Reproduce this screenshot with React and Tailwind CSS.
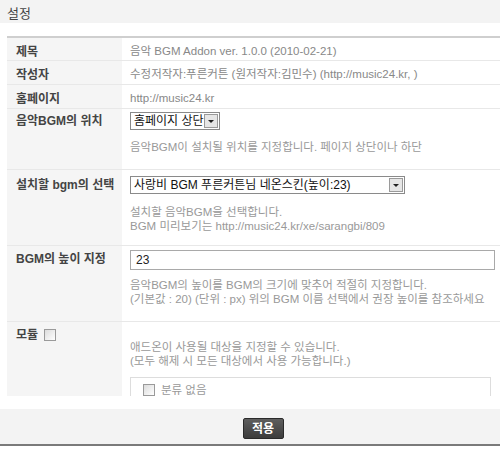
import React from 'react';

const font = { fontFamily: '"Liberation Sans", "Noto Sans CJK KR", sans-serif' };

function Check() {
  return (
    <span className="inline-block w-[12px] h-[12px] border border-[#9a9a9a] bg-gradient-to-br from-[#dcdcdc] to-[#ffffff] align-middle" />
  );
}

function FakeSelect({ label, width }) {
  return (
    <div className={`flex items-center h-[18px] border border-[#8a8a8a] bg-white ${width}`}>
      <span className="flex-1 pl-[3px] text-[12px] text-[#111] leading-none whitespace-nowrap">{label}</span>
      <span className="w-[14px] h-[14px] mr-[1px] flex items-center justify-center border border-[#9a9a9a] bg-[#e6e6e6]">
        <span className="w-0 h-0 border-l-[3px] border-r-[3px] border-t-[3px] border-l-transparent border-r-transparent border-t-[#222]" />
      </span>
    </div>
  );
}

function Row({ label, height, children, top = 'pt-[5px]', last }) {
  return (
    <div className={`flex overflow-hidden ${height} ${last ? '' : 'border-b border-[#e8e8e8]'}`}>
      <div className={`w-[115px] shrink-0 bg-[#f5f5f5] pl-[9px] ${top} text-[12px] font-bold text-[#444]`}>{label}</div>
      <div className={`flex-1 pl-[8px] ${top} text-[11.5px] text-[#777]`}>{children}</div>
    </div>
  );
}

export default function App() {
  return (
    <div className="w-[500px] h-[449px] bg-white overflow-hidden" style={font}>
      <div className="h-[23px] bg-[#f3f3f3] pl-[7px] pt-[4px] text-[13px] text-[#444]">설정</div>
      <div className="h-[13px]" />
      <div className="ml-[7px] border-t-2 border-[#cfcfcf]">
        <Row label="제목" height="h-[23px]">
          <span className="text-[#888]">음악 BGM Addon ver. 1.0.0 (2010-02-21)</span>
        </Row>
        <Row label="작성자" height="h-[24px]">
          <span className="text-[#888]">수정저작자:푸른커튼 (원저작자:김민수) (http://music24.kr, )</span>
        </Row>
        <Row label="홈페이지" height="h-[24px]">
          <span className="text-[#888]">http://music24.kr</span>
        </Row>
        <Row label="음악BGM의 위치" height="h-[61px]" top="pt-[3px]">
          <FakeSelect label="홈페이지 상단" width="w-[90px]" />
          <div className="mt-[9px] text-[#999]">음악BGM이 설치될 위치를 지정합니다. 페이지 상단이나 하단</div>
        </Row>
        <Row label="설치할 bgm의 선택" height="h-[76px]" top="pt-[6px]">
          <FakeSelect label="사랑비 BGM 푸른커튼님 네온스킨(높이:23)" width="w-[275px]" />
          <div className="mt-[11px] leading-[14px] text-[#999]">
            <div>설치할 음악BGM을 선택합니다.</div>
            <div>BGM 미리보기는 http://music24.kr/xe/sarangbi/809</div>
          </div>
        </Row>
        <Row label="BGM의 높이 지정" height="h-[76px]" top="pt-[4px]">
          <div className="h-[20px] w-[365px] border border-[#a9a9a9] pl-[5px] text-[12px] text-[#222] leading-[18px]">23</div>
          <div className="mt-[8px] leading-[14px] text-[#999]">
            <div>음악BGM의 높이를 BGM의 크기에 맞추어 적절히 지정합니다.</div>
            <div>(기본값 : 20) (단위 : px) 위의 BGM 이름 선택에서 권장 높이를 참조하세요</div>
          </div>
        </Row>
        <Row label={<span className="flex items-center gap-[6px]">모듈 <Check /></span>} height="h-[74px]" top="pt-[4px]" last>
          <div className="mt-[14px] leading-[14px] text-[#999]">
            <div>애드온이 사용될 대상을 지정할 수 있습니다.</div>
            <div>(모두 해제 시 모든 대상에서 사용 가능합니다.)</div>
          </div>
          <div className="mt-[9px] mr-[9px] h-[26px] border-l border-t border-r border-[#dddddd] pl-[12px] pt-[6px] flex items-start gap-[6px] text-[#999]">
            <Check />
            <span className="leading-[13px]">분류 없음</span>
          </div>
        </Row>
      </div>
      <div className="h-[13px]" />
      <div className="h-[35px] bg-[#f3f3f3] flex justify-center pl-[26px] pt-[9px]">
        <button className="h-[21px] w-[41px] bg-gradient-to-b from-[#5e5e5e] to-[#3c3c3c] border border-[#2a2a2a] rounded-[2px] text-white text-[12px] font-bold leading-none">적용</button>
      </div>
      <div className="h-[2px] bg-[#7a7a7a]" />
    </div>
  );
}
